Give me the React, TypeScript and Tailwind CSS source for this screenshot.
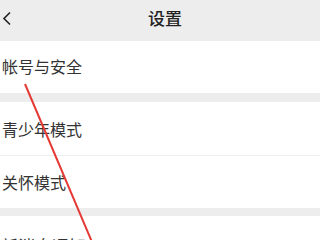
const font = { fontFamily: '"Noto Sans CJK SC", "Noto Sans", sans-serif' };

function Row({ label, border }: { label: string; border?: boolean }) {
  return (
    <div className={`h-[54px] bg-white flex items-center pl-[2px] ${border ? "border-b border-[#eeeeee]" : ""}`}>
      <span className="text-[16px] text-[#333333] leading-none">{label}</span>
    </div>
  );
}

export default function App() {
  return (
    <div className="relative w-[320px] h-[240px] overflow-hidden bg-[#ededed]" style={font}>
      <div className="h-[41px] flex items-center relative">
        <svg className="absolute left-[2px] top-[11px]" width="10" height="15" viewBox="0 0 10 15">
          <path d="M8 1.5 L2 7.5 L8 13.5" fill="none" stroke="#222" strokeWidth="1.6" />
        </svg>
        <div className="flex-1 text-center pl-[10px] text-[17px] font-medium text-[#222222] leading-none -mt-[6px]">设置</div>
      </div>
      <div className="h-[52px] bg-white flex items-center pl-[2px]">
        <span className="text-[16px] text-[#333333] leading-none -mt-[2px]">帐号与安全</span>
      </div>
      <div className="h-[9px]" />
      <Row label="青少年模式" border />
      <div className="h-[52px] bg-white flex items-center pl-[2px]">
        <span className="text-[16px] text-[#333333] leading-none">关怀模式</span>
      </div>
      <div className="h-[8px]" />
      <div className="h-[60px] bg-white pl-[1px] pt-[18px]">
        <span className="text-[17px] text-[#333333] leading-none">新消息通知</span>
      </div>
      <svg className="absolute left-0 top-0" width="320" height="240" viewBox="0 0 320 240">
        <line x1="25" y1="84" x2="92" y2="242" stroke="#e53935" strokeWidth="2" />
      </svg>
    </div>
  );
}
